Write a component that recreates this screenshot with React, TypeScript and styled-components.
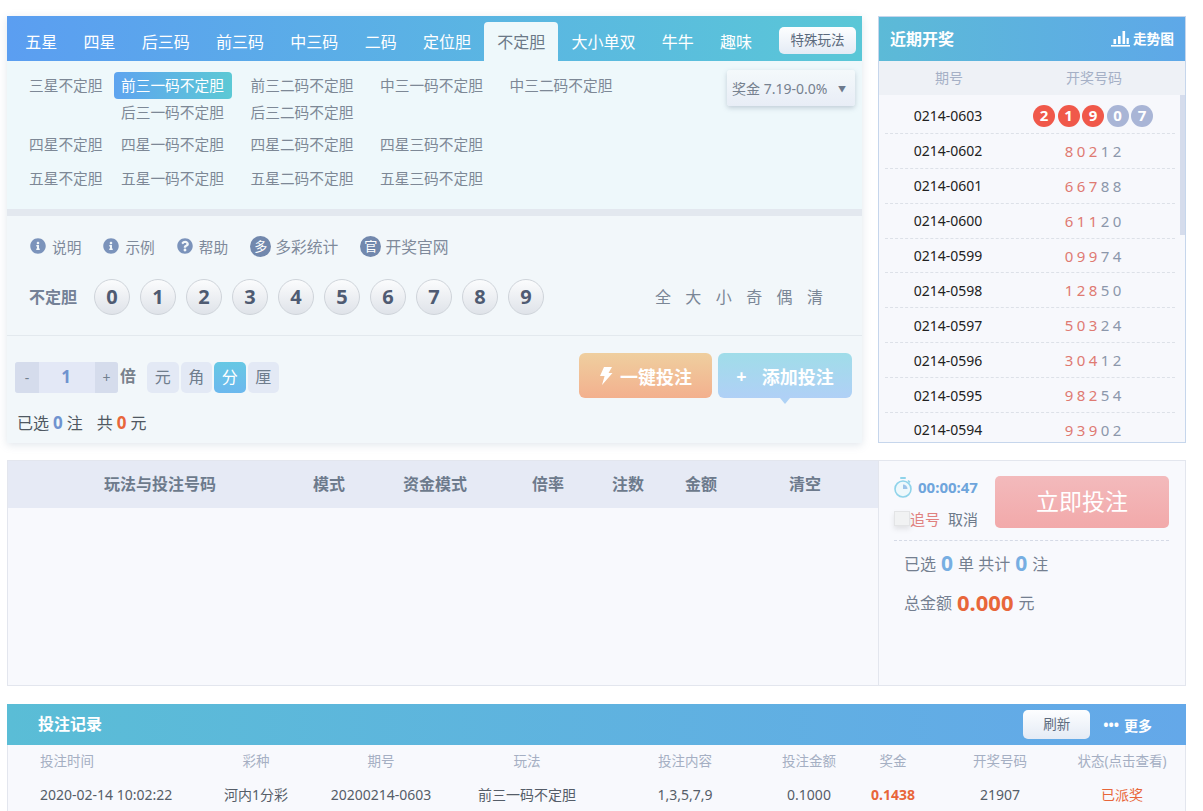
import React from 'react';
import styled, { createGlobalStyle } from 'styled-components';
import { FaInfoCircle, FaQuestionCircle } from 'react-icons/fa';

const GlobalStyle = createGlobalStyle`
  html, body {
    margin: 0;
    height: 811px;
    overflow: hidden;
    background: #fff;
  }
  body {
    font-family: "Noto Sans", "Noto Sans CJK SC", sans-serif;
    font-size: 14px;
    color: #333;
  }
  * { box-sizing: border-box; }
`;

const Page = styled.div`
  width: 1203px;
  padding: 16px 17px 0 7px;
`;
const TopRow = styled.div`
  display: flex;
  gap: 16px;
  height: 427px;
`;
const MainPanel = styled.section`
  width: 855px;
  background: #f2f7fa;
  box-shadow: 0 2px 8px rgba(120, 140, 170, 0.22);
`;
const TabBar = styled.nav`
  display: flex;
  align-items: flex-end;
  height: 45px;
  padding-left: 5px;
  background: linear-gradient(90deg, #5b9ef1, #5ac7d7);
`;
const Tab = styled.div<{ $active?: boolean }>`
  height: 39px;
  line-height: 40px;
  padding: 0 13.15px;
  font-size: 16px;
  border-radius: 4px 4px 0 0;
  color: ${(p) => (p.$active ? '#6b7887' : '#fff')};
  background: ${(p) => (p.$active ? '#eef8fb' : 'transparent')};
`;
const SpecialButton = styled.div`
  margin: 0 6px 7px auto;
  width: 77px;
  height: 27px;
  line-height: 27px;
  text-align: center;
  font-size: 13.5px;
  color: #5c6a7c;
  border-radius: 5px;
  background: linear-gradient(180deg, #fdfeff, #e4ebf5);
`;
const SubArea = styled.div`
  display: flex;
  justify-content: space-between;
  height: 148px;
  padding: 11px 7px 0 22px;
  background: #eef8fb;
`;
const SubRows = styled.div`
  display: flex;
  flex-direction: column;
`;
const SubRow = styled.div<{ $top: number }>`
  display: flex;
  margin-top: ${(p) => p.$top}px;
`;
const SubLabel = styled.div`
  width: 85px;
  line-height: 27px;
  font-size: 14.7px;
  color: #7d8896;
`;
const SubGrid = styled.div`
  display: grid;
  grid-template-columns: repeat(4, 118px);
  column-gap: 11.5px;
`;
const SubItem = styled.div<{ $active?: boolean }>`
  height: 27px;
  line-height: 27px;
  padding-left: 7px;
  font-size: 14.7px;
  white-space: nowrap;
  border-radius: 4px;
  color: ${(p) => (p.$active ? '#fff' : '#7d8896')};
  background: ${(p) => (p.$active ? 'linear-gradient(90deg, #5ea4ef, #5cc9d5)' : 'transparent')};
`;
const PrizeBox = styled.div`
  display: flex;
  align-items: center;
  justify-content: space-between;
  width: 128px;
  height: 36px;
  margin-top: -2px;
  padding: 0 9px 0 5px;
  font-size: 14px;
  color: #76818f;
  border-radius: 3px;
  background: linear-gradient(180deg, #f4f9fb, #e8edf6);
  box-shadow: 0 2px 5px rgba(110, 125, 150, 0.35);
`;
const PrizeArrow = styled.span`
  font-size: 8px;
  color: #6d7a8d;
`;
const ThickBar = styled.div`
  height: 7px;
  background: #e3e8ef;
`;
const ToolRow = styled.div`
  display: flex;
  align-items: center;
  gap: 22px;
  height: 20px;
  margin-top: 20px;
  padding-left: 23px;
  margin-bottom: 2px;
`;
const ToolItem = styled.div<{ $large?: boolean }>`
  display: flex;
  align-items: center;
  gap: ${(p) => (p.$large ? 4 : 6)}px;
  font-size: ${(p) => (p.$large ? 15.8 : 14.7)}px;
  color: #7f8a9b;
  svg { color: #7b93bb; font-size: 16px; }
`;
const ToolBadge = styled.span`
  width: 21px;
  height: 21px;
  line-height: 21px;
  text-align: center;
  font-size: 13px;
  color: #fff;
  border-radius: 50%;
  background: #7288ad;
`;
const BallRow = styled.div`
  display: flex;
  align-items: center;
  height: 78px;
  padding: 21px 39px 20px 22px;
  border-bottom: 1px solid #e3e9ee;
`;
const BallLabel = styled.div`
  width: 65px;
  margin-top: -2px;
  font-size: 16px;
  font-weight: 700;
  color: #748196;
`;
const Balls = styled.div`
  display: flex;
  gap: 10px;
`;
const Ball = styled.div`
  width: 36px;
  height: 36px;
  line-height: 33px;
  text-align: center;
  font-size: 20px;
  font-weight: 700;
  color: #4f5b72;
  border-radius: 50%;
  border: 1px solid #cfd4da;
  background: linear-gradient(180deg, #fbfcfd, #dfe3e9);
`;
const QuickPicks = styled.div`
  display: flex;
  gap: 14.4px;
  margin: -3px 0 0 auto;
  font-size: 16px;
  color: #7a8696;
`;
const ControlRow = styled.div`
  display: flex;
  align-items: flex-start;
  padding: 17px 10px 0 8px;
`;
const Stepper = styled.div`
  display: flex;
  height: 31px;
  margin-top: 9px;
  border-radius: 3px;
  overflow: hidden;
  background: #e3e8f6;
`;
const StepButton = styled.div<{ $w: number }>`
  width: ${(p) => p.$w}px;
  line-height: 31px;
  text-align: center;
  font-size: 14px;
  color: #72808f;
  background: #d5dcec;
`;
const StepValue = styled.div`
  width: 56px;
  padding-right: 2px;
  line-height: 29px;
  text-align: center;
  font-size: 17px;
  font-weight: 700;
  color: #6f93cf;
`;
const TimesLabel = styled.div`
  margin: 9px 11px 0 2px;
  line-height: 29px;
  font-size: 16px;
  font-weight: 700;
  color: #77818c;
`;
const Units = styled.div`
  display: flex;
  gap: 2px;
  margin-top: 9px;
`;
const Unit = styled.div<{ $active?: boolean }>`
  width: 31.5px;
  height: 31px;
  line-height: 31px;
  text-align: center;
  font-size: 16px;
  border-radius: 5px;
  color: ${(p) => (p.$active ? '#fff' : '#6f7d8d')};
  background: ${(p) => (p.$active ? 'linear-gradient(180deg, #66c8e4, #6cb8ee)' : '#e3e9f5')};
`;
const ActionButtons = styled.div`
  display: flex;
  gap: 6px;
  margin-left: auto;
`;
const ActionButton = styled.div<{ $from: string; $to: string }>`
  position: relative;
  display: flex;
  align-items: center;
  justify-content: center;
  gap: 7px;
  width: 133px;
  height: 45px;
  font-size: 18px;
  font-weight: 700;
  color: #fff;
  border-radius: 6px;
  background: linear-gradient(180deg, ${(p) => p.$from}, ${(p) => p.$to});
`;
const AddButton = styled(ActionButton)`
  width: 134px;
  gap: 15px;
  &::after {
    content: '';
    position: absolute;
    left: 62px;
    top: 45px;
    border: 5px solid transparent;
    border-top: 6px solid #aed2f5;
    border-bottom: 0;
  }
`;
const Summary = styled.div`
  display: flex;
  align-items: center;
  gap: 3px;
  margin-top: 15px;
  padding-left: 10px;
  line-height: 20px;
  font-size: 16px;
  color: #4f5862;
`;
const SummaryGap = styled.span`
  width: 8px;
`;
const Amount = styled.b<{ $color: string; $size?: number }>`
  margin: 0 1px;
  font-size: ${(p) => p.$size ?? 17}px;
  color: ${(p) => p.$color};
`;

const SidePanel = styled.aside`
  position: relative;
  width: 308px;
  border: 1px solid #c6d6ec;
  overflow: hidden;
  background: #f7f8fc;
`;
const SideHeader = styled.header`
  display: flex;
  align-items: center;
  justify-content: space-between;
  height: 44px;
  padding: 0 11px 2px;
  color: #fff;
  background: linear-gradient(90deg, #5cbad7, #5ea8e8);
`;
const HeaderTitle = styled.div`
  font-size: 16px;
  font-weight: 700;
`;
const TrendLink = styled.div`
  display: flex;
  align-items: center;
  gap: 3px;
  font-size: 13.7px;
  font-weight: 700;
`;
const SideColumns = styled.div`
  display: grid;
  grid-template-columns: 140px 150px;
  height: 34px;
  line-height: 33px;
  text-align: center;
  font-size: 14px;
  color: #a5b0c6;
  background: #eef1f6;
`;
const DrawList = styled.div`
  position: relative;
  padding: 4px 0 0 6px;
`;
const ScrollThumb = styled.div`
  position: absolute;
  top: 0;
  right: 0;
  width: 5px;
  height: 140px;
  background: #d5dcec;
`;
const DrawRow = styled.div`
  display: grid;
  grid-template-columns: 126px 164px;
  width: 290px;
  height: 34.9px;
  align-items: center;
  text-align: center;
  font-size: 14px;
  color: #222;
  border-bottom: 1px dashed #dde1e8;
`;
const Digits = styled.div`
  display: flex;
  justify-content: center;
`;
const Digit = styled.span<{ $hot: boolean }>`
  width: 12px;
  font-size: 15px;
  color: ${(p) => (p.$hot ? '#df7a72' : '#8c97ab')};
`;
const DrawBalls = styled.div`
  display: flex;
  justify-content: center;
  gap: 2.5px;
`;
const DrawBall = styled.span<{ $hot: boolean }>`
  width: 22px;
  height: 22px;
  line-height: 21px;
  font-size: 15px;
  font-weight: 700;
  color: #fff;
  border-radius: 50%;
  background: ${(p) => (p.$hot ? '#f0584a' : '#a9b5d6')};
`;

const MiddleRow = styled.div`
  display: flex;
  height: 226px;
  margin-top: 17px;
`;
const OrderTable = styled.section`
  width: 871px;
  background: #f8f9fd;
  border: 1px solid #e3e6ee;
  border-right: 0;
`;
const OrderHead = styled.div`
  display: flex;
  align-items: center;
  height: 47px;
  padding: 0 0 3px 96px;
  background: #e6eaf5;
`;
const OrderCell = styled.div<{ $offset: number }>`
  margin-left: ${(p) => p.$offset}px;
  font-size: 16px;
  font-weight: 700;
  color: #6d7a8c;
`;
const BetPanel = styled.section`
  width: 308px;
  padding: 15px 16px 0 15px;
  background: #f8f9fd;
  border: 1px solid #e3e6ee;
`;
const BetTop = styled.div`
  display: flex;
  justify-content: space-between;
  height: 65px;
  border-bottom: 1px dashed #d5dae6;
`;
const Countdown = styled.div`
  display: flex;
  align-items: center;
  gap: 6px;
  height: 22px;
  font-size: 15px;
  font-weight: 700;
  color: #6fa5dc;
`;
const ChaseRow = styled.div`
  display: flex;
  align-items: center;
  margin-top: 10px;
  font-size: 15px;
  color: #6e7a8a;
`;
const CheckBox = styled.span`
  width: 16px;
  height: 15px;
  background: #f1f2f3;
  border: 1px solid #e3e4e6;
  box-shadow: 0 3px 5px rgba(120, 120, 120, 0.18);
`;
const ChaseLabel = styled.span`
  margin-right: 8px;
  color: #e0817f;
`;
const SubmitButton = styled.div`
  width: 174px;
  height: 52px;
  line-height: 51px;
  text-align: center;
  font-size: 23px;
  color: #fff;
  border-radius: 5px;
  background: linear-gradient(180deg, #f3babc, #f2a9aa);
`;
const BetLine = styled.div<{ $top: number }>`
  display: flex;
  align-items: center;
  gap: 4px;
  height: 30px;
  margin-top: ${(p) => p.$top}px;
  padding-left: 10px;
  font-size: 16px;
  color: #747f90;
`;

const Records = styled.section`
  width: 1179px;
  margin-top: 18px;
`;
const RecordsHeader = styled.header`
  display: flex;
  align-items: center;
  height: 41px;
  padding: 0 34px 3px 31px;
  color: #fff;
  background: linear-gradient(90deg, #5abdd6, #64a8e9);
`;
const RefreshButton = styled.div`
  width: 67px;
  height: 29px;
  margin: 3px 0 0 auto;
  line-height: 29px;
  text-align: center;
  font-size: 13.5px;
  color: #5c6a7c;
  border-radius: 5px;
  background: linear-gradient(180deg, #fdfeff, #e4ebf5);
`;
const MoreLink = styled.div`
  display: flex;
  align-items: center;
  gap: 5px;
  margin: 3px 0 0 13px;
  font-size: 14px;
  font-weight: 700;
`;
const RecordsBody = styled.div`
  height: 80px;
  background: #f8f9fd;
  border: 1px solid #e3e6ee;
  border-top: 0;
`;
const RecordRow = styled.div<{ $h: number; $muted?: boolean }>`
  display: grid;
  grid-template-columns: 186px 124px 126px 166px 150px 98px 70px 144px 100px;
  align-items: center;
  height: ${(p) => p.$h}px;
  text-align: center;
  font-size: ${(p) => (p.$muted ? 13.5 : 14)}px;
  color: ${(p) => (p.$muted ? '#a5afc3' : '#555d68')};
  & > :first-child {
    padding-left: 32px;
    text-align: left;
  }
`;
const Prize = styled.b`
  color: #e8663a;
`;
const Paid = styled.span`
  color: #e8663a;
`;

const tabs = ['五星', '四星', '后三码', '前三码', '中三码', '二码', '定位胆', '不定胆', '大小单双', '牛牛', '趣味'];
const subGroups = [
  { label: '三星不定胆', top: 0, items: ['前三一码不定胆', '前三二码不定胆', '中三一码不定胆', '中三二码不定胆', '后三一码不定胆', '后三二码不定胆'] },
  { label: '四星不定胆', top: 5, items: ['四星一码不定胆', '四星二码不定胆', '四星三码不定胆'] },
  { label: '五星不定胆', top: 7, items: ['五星一码不定胆', '五星二码不定胆', '五星三码不定胆'] },
];
const draws = [
  ['0214-0602', '80212'],
  ['0214-0601', '66788'],
  ['0214-0600', '61120'],
  ['0214-0599', '09974'],
  ['0214-0598', '12850'],
  ['0214-0597', '50324'],
  ['0214-0596', '30412'],
  ['0214-0595', '98254'],
  ['0214-0594', '93902'],
];
const orderCols: [string, number][] = [
  ['玩法与投注号码', 0],
  ['模式', 97],
  ['资金模式', 58],
  ['倍率', 65],
  ['注数', 48],
  ['金额', 41],
  ['清空', 72],
];

function ChartIcon() {
  return (
    <svg width="19" height="17" viewBox="0 0 19 17" fill="#fff">
      <rect x="0" y="15" width="19" height="1.6" />
      <rect x="2.5" y="9" width="2.6" height="5" />
      <rect x="7" y="6" width="2.6" height="8" />
      <rect x="11.5" y="1" width="2.6" height="13" />
      <rect x="15.6" y="8" width="2.2" height="6" />
    </svg>
  );
}

function BoltIcon() {
  return (
    <svg width="14" height="18" viewBox="0 0 14 18" fill="#fff">
      <path d="M5 0h8L9.5 6H13.5L3 18l2.6-9H1z" />
    </svg>
  );
}

function StopwatchIcon() {
  return (
    <svg width="18" height="21" viewBox="0 0 18 21" fill="none">
      <rect x="6" y="0" width="6" height="2" rx="1" fill="#8fd3ea" />
      <path d="M14 3.5l2 1.8" stroke="#8fd3ea" strokeWidth="1.6" />
      <circle cx="9" cy="12" r="8" stroke="#8fd3ea" strokeWidth="1.6" fill="#eef8fc" />
      <path d="M9 12V7.5A4.5 4.5 0 0 1 13.5 12z" fill="#9cc4ea" />
    </svg>
  );
}

export default function App() {
  return (
    <>
      <GlobalStyle />
      <Page>
        <TopRow>
          <MainPanel>
            <TabBar>
              {tabs.map((t) => (
                <Tab key={t} $active={t === '不定胆'}>{t}</Tab>
              ))}
              <SpecialButton>特殊玩法</SpecialButton>
            </TabBar>
            <SubArea>
              <SubRows>
                {subGroups.map((g) => (
                  <SubRow key={g.label} $top={g.top}>
                    <SubLabel>{g.label}</SubLabel>
                    <SubGrid>
                      {g.items.map((it) => (
                        <SubItem key={it} $active={it === '前三一码不定胆'}>{it}</SubItem>
                      ))}
                    </SubGrid>
                  </SubRow>
                ))}
              </SubRows>
              <PrizeBox>
                奖金 7.19-0.0%
                <PrizeArrow>▼</PrizeArrow>
              </PrizeBox>
            </SubArea>
            <ThickBar />
            <ToolRow>
              <ToolItem><FaInfoCircle />说明</ToolItem>
              <ToolItem><FaInfoCircle />示例</ToolItem>
              <ToolItem><FaQuestionCircle />帮助</ToolItem>
              <ToolItem $large><ToolBadge>多</ToolBadge>多彩统计</ToolItem>
              <ToolItem $large><ToolBadge>官</ToolBadge>开奖官网</ToolItem>
            </ToolRow>
            <BallRow>
              <BallLabel>不定胆</BallLabel>
              <Balls>
                {[0, 1, 2, 3, 4, 5, 6, 7, 8, 9].map((n) => (
                  <Ball key={n}>{n}</Ball>
                ))}
              </Balls>
              <QuickPicks>
                {['全', '大', '小', '奇', '偶', '清'].map((q) => (
                  <span key={q}>{q}</span>
                ))}
              </QuickPicks>
            </BallRow>
            <ControlRow>
              <Stepper>
                <StepButton $w={24}>-</StepButton>
                <StepValue>1</StepValue>
                <StepButton $w={23}>+</StepButton>
              </Stepper>
              <TimesLabel>倍</TimesLabel>
              <Units>
                <Unit>元</Unit>
                <Unit>角</Unit>
                <Unit $active>分</Unit>
                <Unit>厘</Unit>
              </Units>
              <ActionButtons>
                <ActionButton $from="#efcf9f" $to="#f3b08e"><BoltIcon />一键投注</ActionButton>
                <AddButton $from="#a0dde9" $to="#b0d0f6"><span>+</span>添加投注</AddButton>
              </ActionButtons>
            </ControlRow>
            <Summary>
              已选 <Amount $color="#6f93cf">0</Amount> 注 <SummaryGap />共 <Amount $color="#e8663a">0</Amount> 元
            </Summary>
          </MainPanel>

          <SidePanel>
            <SideHeader>
              <HeaderTitle>近期开奖</HeaderTitle>
              <TrendLink><ChartIcon />走势图</TrendLink>
            </SideHeader>
            <SideColumns>
              <span>期号</span>
              <span>开奖号码</span>
            </SideColumns>
            <DrawList>
              <ScrollThumb />
              <DrawRow>
                <span>0214-0603</span>
                <DrawBalls>
                  {'21907'.split('').map((d, i) => (
                    <DrawBall key={i} $hot={i < 3}>{d}</DrawBall>
                  ))}
                </DrawBalls>
              </DrawRow>
              {draws.map(([period, nums]) => (
                <DrawRow key={period}>
                  <span>{period}</span>
                  <Digits>
                    {nums.split('').map((d, i) => (
                      <Digit key={i} $hot={i < 3}>{d}</Digit>
                    ))}
                  </Digits>
                </DrawRow>
              ))}
            </DrawList>
          </SidePanel>
        </TopRow>

        <MiddleRow>
          <OrderTable>
            <OrderHead>
              {orderCols.map(([name, offset]) => (
                <OrderCell key={name} $offset={offset}>{name}</OrderCell>
              ))}
            </OrderHead>
          </OrderTable>
          <BetPanel>
            <BetTop>
              <div>
                <Countdown><StopwatchIcon />00:00:47</Countdown>
                <ChaseRow>
                  <CheckBox />
                  <ChaseLabel>追号</ChaseLabel>
                  取消
                </ChaseRow>
              </div>
              <SubmitButton>立即投注</SubmitButton>
            </BetTop>
            <BetLine $top={7}>
              已选 <Amount $color="#77aee2" $size={21}>0</Amount> 单 共计 <Amount $color="#77aee2" $size={21}>0</Amount> 注
            </BetLine>
            <BetLine $top={9}>
              总金额 <Amount $color="#e8663a" $size={22}>0.000</Amount> 元
            </BetLine>
          </BetPanel>
        </MiddleRow>

        <Records>
          <RecordsHeader>
            <HeaderTitle>投注记录</HeaderTitle>
            <RefreshButton>刷新</RefreshButton>
            <MoreLink><span>•••</span>更多</MoreLink>
          </RecordsHeader>
          <RecordsBody>
            <RecordRow $h={30} $muted>
              <span>投注时间</span>
              <span>彩种</span>
              <span>期号</span>
              <span>玩法</span>
              <span>投注内容</span>
              <span>投注金额</span>
              <span>奖金</span>
              <span>开奖号码</span>
              <span>状态(点击查看)</span>
            </RecordRow>
            <RecordRow $h={38}>
              <span>2020-02-14 10:02:22</span>
              <span>河内1分彩</span>
              <span>20200214-0603</span>
              <span>前三一码不定胆</span>
              <span>1,3,5,7,9</span>
              <span>0.1000</span>
              <Prize>0.1438</Prize>
              <span>21907</span>
              <Paid>已派奖</Paid>
            </RecordRow>
          </RecordsBody>
        </Records>
      </Page>
    </>
  );
}
